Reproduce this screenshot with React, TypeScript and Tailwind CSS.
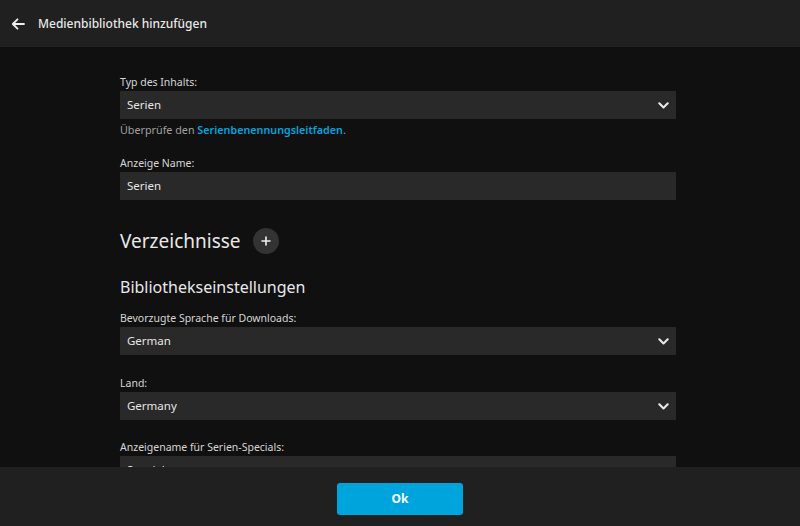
import type { FC } from "react";

const Chevron: FC = () => (
  <svg width="11" height="7" viewBox="0 0 11 7" className="shrink-0">
    <polyline points="1.3,1.3 5.5,5.5 9.7,1.3" fill="none" stroke="#e8e8e8" strokeWidth="2.1" strokeLinecap="round" strokeLinejoin="round" />
  </svg>
);

const Label: FC<{ text: string }> = ({ text }) => (
  <div className="h-[18px] text-[10.5px] leading-[18px] text-[#d6d6d6]">{text}</div>
);

const Select: FC<{ value: string }> = ({ value }) => (
  <div className="flex h-[28px] items-center justify-between bg-[#292929] pl-[7px] pr-[7px] text-[11.5px] text-[#e6e6e6]">
    <span>{value}</span>
    <Chevron />
  </div>
);

const Input: FC<{ value: string }> = ({ value }) => (
  <div className="flex h-[28px] items-center bg-[#292929] pl-[7px] text-[11.5px] text-[#e6e6e6]">{value}</div>
);

export default function App() {
  return (
    <div
      className="flex h-[526px] w-[800px] flex-col overflow-hidden bg-[#101010]"
      style={{ fontFamily: '"Noto Sans", "Open Sans", sans-serif' }}
    >
      {/* header */}
      <div className="flex h-[47px] shrink-0 items-center bg-[#202020]">
        <svg width="14" height="12" viewBox="0 0 14 12" className="ml-[11px]">
          <path d="M13 6H2M6.5 1.3 1.8 6l4.7 4.7" fill="none" stroke="#eeeeee" strokeWidth="1.8" strokeLinecap="round" strokeLinejoin="round" />
        </svg>
        <span className="ml-[13px] text-[12px] font-medium text-[#e8e8e8]">Medienbibliothek hinzufügen</span>
      </div>

      {/* scrolling content */}
      <div className="flex-1 overflow-hidden">
        <div className="ml-[120px] w-[556px] pt-[26px]">
          <Label text="Typ des Inhalts:" />
          <Select value="Serien" />
          <div className="mt-[2px] h-[18px] text-[10.75px] leading-[18px] text-[#a0a0a0]">
            Überprüfe den <span className="font-semibold text-[#00a4dc]">Serienbenennungsleitfaden</span>.
          </div>

          <div className="mt-[15px]">
            <Label text="Anzeige Name:" />
            <Input value="Serien" />
          </div>

          <div className="mt-[27px] flex h-[28px] items-center">
            <h2 className="text-[19px] leading-[28px] text-[#e8e8e8]">Verzeichnisse</h2>
            <div className="ml-[12px] flex h-[26px] w-[26px] items-center justify-center rounded-full bg-[#333333]">
              <svg width="10" height="10" viewBox="0 0 10 10">
                <path d="M5 1v8M1 5h8" stroke="#f0f0f0" strokeWidth="1.6" strokeLinecap="round" />
              </svg>
            </div>
          </div>

          <h3 className="mt-[20px] h-[24px] text-[16px] leading-[24px] text-[#e8e8e8]">Bibliothekseinstellungen</h3>

          <div className="mt-[10px]">
            <Label text="Bevorzugte Sprache für Downloads:" />
            <Select value="German" />
          </div>

          <div className="mt-[19px]">
            <Label text="Land:" />
            <Select value="Germany" />
          </div>

          <div className="mt-[18px]">
            <Label text="Anzeigename für Serien-Specials:" />
            <Input value="Specials" />
          </div>
        </div>
      </div>

      {/* footer */}
      <div className="flex h-[59px] shrink-0 justify-center bg-[#202020] pt-[16px]">
        <button className="h-[32px] w-[126px] rounded-[3px] bg-[#00a4dc] text-[12px] font-bold text-white">Ok</button>
      </div>
    </div>
  );
}
